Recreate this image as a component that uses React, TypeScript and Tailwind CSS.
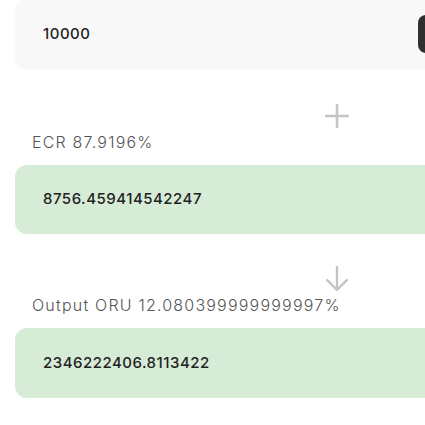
export default function App() {
  return (
    <div className="relative w-[425px] h-[425px] overflow-hidden bg-white" style={{ fontFamily: "Inter, 'Noto Sans', sans-serif" }}>
      <div className="w-[644px] ml-[15px] flex flex-col">
        <div className="h-[68px] rounded-xl bg-[#f8f8f9] shadow-[0_1px_3px_rgba(0,0,0,0.04)] flex items-center pl-[28px]">
          <span className="w-[375px] text-[15px] font-medium tracking-[0.5px] text-[#222]">10000</span>
          <div className="w-[40px] h-[38px] rounded-lg bg-[#2f2f2f]" />
        </div>

        <div className="mt-[35px] flex justify-center">
          <svg width="26" height="26" viewBox="0 0 24 24" fill="none" stroke="#c4c4c4" strokeWidth="2.4" strokeLinecap="round">
            <path d="M12 2v20M2 12h20" />
          </svg>
        </div>

        <p className="mt-[1px] pl-[17px] h-[24px] leading-[24px] text-[16px] font-light tracking-[1.2px] text-[#555]">ECR 87.9196%</p>

        <div className="mt-[11px] h-[69px] rounded-xl bg-[#d6ecd6] flex items-center pl-[28px]">
          <span className="text-[15px] font-medium tracking-[0.5px] text-[#222]">8756.459414542247</span>
        </div>

        <div className="mt-[32px] flex justify-center">
          <svg width="26" height="26" viewBox="0 0 24 24" fill="none" stroke="#c4c4c4" strokeWidth="2.2" strokeLinecap="round" strokeLinejoin="round">
            <path d="M12 1v21M3 13l9 9 9-9" />
          </svg>
        </div>

        <p className="mt-[1px] pl-[17px] h-[24px] leading-[24px] text-[16px] font-light tracking-[1.2px] text-[#555]">Output ORU 12.080399999999997%</p>

        <div className="mt-[11px] h-[70px] rounded-xl bg-[#d6ecd6] flex items-center pl-[28px]">
          <span className="text-[15px] font-medium tracking-[0.5px] text-[#222]">2346222406.8113422</span>
        </div>
      </div>
    </div>
  );
}
